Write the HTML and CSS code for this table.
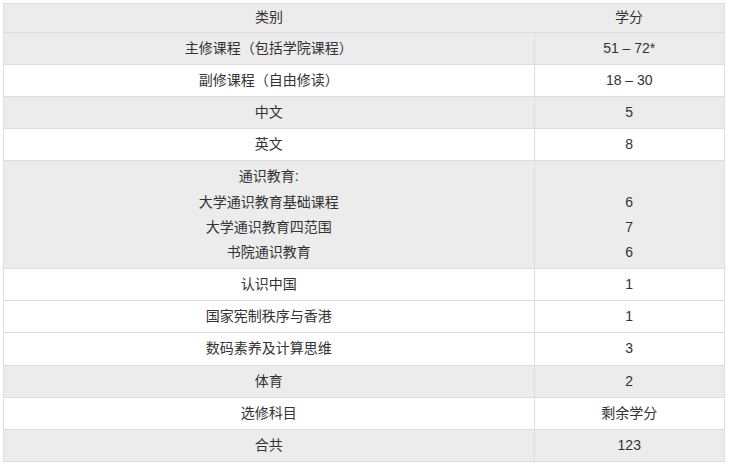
FILE: index.html
```html
<!DOCTYPE html>
<html lang="zh">
<head>
<meta charset="utf-8">
<link rel="stylesheet" href="styles.css">
</head>
<body>
<table class="credits">
  <thead>
    <tr><th class="cat">类别</th><th class="val">学分</th></tr>
  </thead>
  <tbody>
    <tr class="gray"><td>主修课程（包括学院课程）</td><td>51 – 72*</td></tr>
    <tr><td>副修课程（自由修读）</td><td>18 – 30</td></tr>
    <tr class="gray"><td>中文</td><td>5</td></tr>
    <tr><td>英文</td><td>8</td></tr>
    <tr class="gray"><td>通识教育:<br>大学通识教育基础课程<br>大学通识教育四范围<br>书院通识教育</td><td><br>6<br>7<br>6</td></tr>
    <tr><td>认识中国</td><td>1</td></tr>
    <tr><td>国家宪制秩序与香港</td><td>1</td></tr>
    <tr><td>数码素养及计算思维</td><td>3</td></tr>
    <tr class="gray"><td>体育</td><td>2</td></tr>
    <tr><td>选修科目</td><td>剩余学分</td></tr>
    <tr class="gray"><td>合共</td><td>123</td></tr>
  </tbody>
</table>
</body>
</html>
```

FILE: styles.css
```css
html, body {
  background: #ffffff;
}
body {
  margin: 3px;
  font-family: "Liberation Sans", "Noto Sans CJK SC", sans-serif;
  font-size: 14px;
  color: #333333;
}
.credits {
  width: 722px;
  border-collapse: collapse;
  border: 1px solid #dddddd;
  table-layout: fixed;
}
.credits th {
  font-weight: normal;
  background: #ececec;
  line-height: 1.8;
  padding: 1.2px 0;
  text-align: center;
  border-bottom: 1px solid #dddddd;
}
.credits th.cat {
  width: 530px;
}
.credits td {
  border: 1px solid #dddddd;
  text-align: center;
  line-height: 1.8;
  padding: 3px 0;
}
.credits tr.gray td {
  background: #ececec;
}
```
